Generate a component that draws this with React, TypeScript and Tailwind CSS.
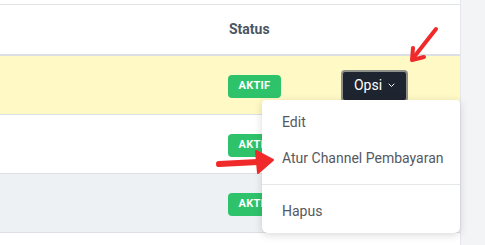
const rows = [
  { bg: "bg-[#fef9c5]" },
  { bg: "bg-white" },
  { bg: "bg-[#edf1f4]" },
];

function Badge() {
  return (
    <span className="inline-flex h-[23px] w-[53px] items-center justify-center rounded-[4px] bg-[#2ec36b] text-[11px] font-bold tracking-wide text-white">
      AKTIF
    </span>
  );
}

export default function App() {
  return (
    <div
      className="relative flex h-[245px] w-[485px] overflow-hidden bg-[#f3f4f6]"
      style={{ fontFamily: "Roboto, 'Liberation Sans', sans-serif" }}
    >
      <div className="w-[461px] shrink-0 border-r border-[#e5e7eb] bg-white">
        <div className="h-[4px]" />
        <div className="flex h-[52px] items-center border-t border-b-2 border-[#dcdfe3] border-t-[#e2e4e7]">
          <div className="w-[229px]" />
          <div className="text-[14px] font-bold text-[#4b5563]">Status</div>
        </div>
        {rows.map((r, i) => (
          <div
            key={i}
            className={`flex h-[59px] items-center border-b border-[#dcdfe3] ${r.bg}`}
          >
            <div className="w-[228px]" />
            <div className="w-[113px]">
              <Badge />
            </div>
            {i === 0 && (
              <button className="mt-[1px] flex h-[32px] w-[67px] items-center justify-center gap-[6px] rounded-[4px] border-2 border-[#8e918a] bg-[#1f2530] text-[14px] text-white">
                Opsi
                <svg width="7" height="5" viewBox="0 0 7 5" fill="none">
                  <path d="M1 1l2.5 2.5L6 1" stroke="white" strokeWidth="1" strokeLinecap="round" strokeLinejoin="round" />
                </svg>
              </button>
            )}
          </div>
        ))}
      </div>

      <div className="absolute left-[262px] top-[100px] w-[198px] whitespace-nowrap rounded-b-[6px] rounded-t-[4px] bg-white py-[4px] text-[14px] text-[#55595f] shadow-[0_2px_8px_rgba(0,0,0,0.15)]">
        <div className="flex h-[36px] items-center px-[20px]">Edit</div>
        <div className="flex h-[36px] items-center px-[20px]">Atur Channel Pembayaran</div>
        <div className="my-[8px] border-t border-[#e5e7eb]" />
        <div className="flex h-[36px] items-center px-[20px]">Hapus</div>
      </div>

      <svg className="pointer-events-none absolute left-0 top-0" width="485" height="245">
        <g stroke="#f02a2a" strokeWidth="4" strokeLinecap="round" fill="none">
          <path d="M436 29 L414 57" />
          <path d="M412 60 L413 48 M412 60 L424 57" strokeLinejoin="round" />
        </g>
        <path d="M219 164 L258 162" stroke="#f02a2a" strokeWidth="6" strokeLinecap="round" />
        <path d="M256 151 L273 160 L258 173 Z" fill="#f02a2a" stroke="#f02a2a" strokeWidth="2" strokeLinejoin="round" />
      </svg>
    </div>
  );
}
